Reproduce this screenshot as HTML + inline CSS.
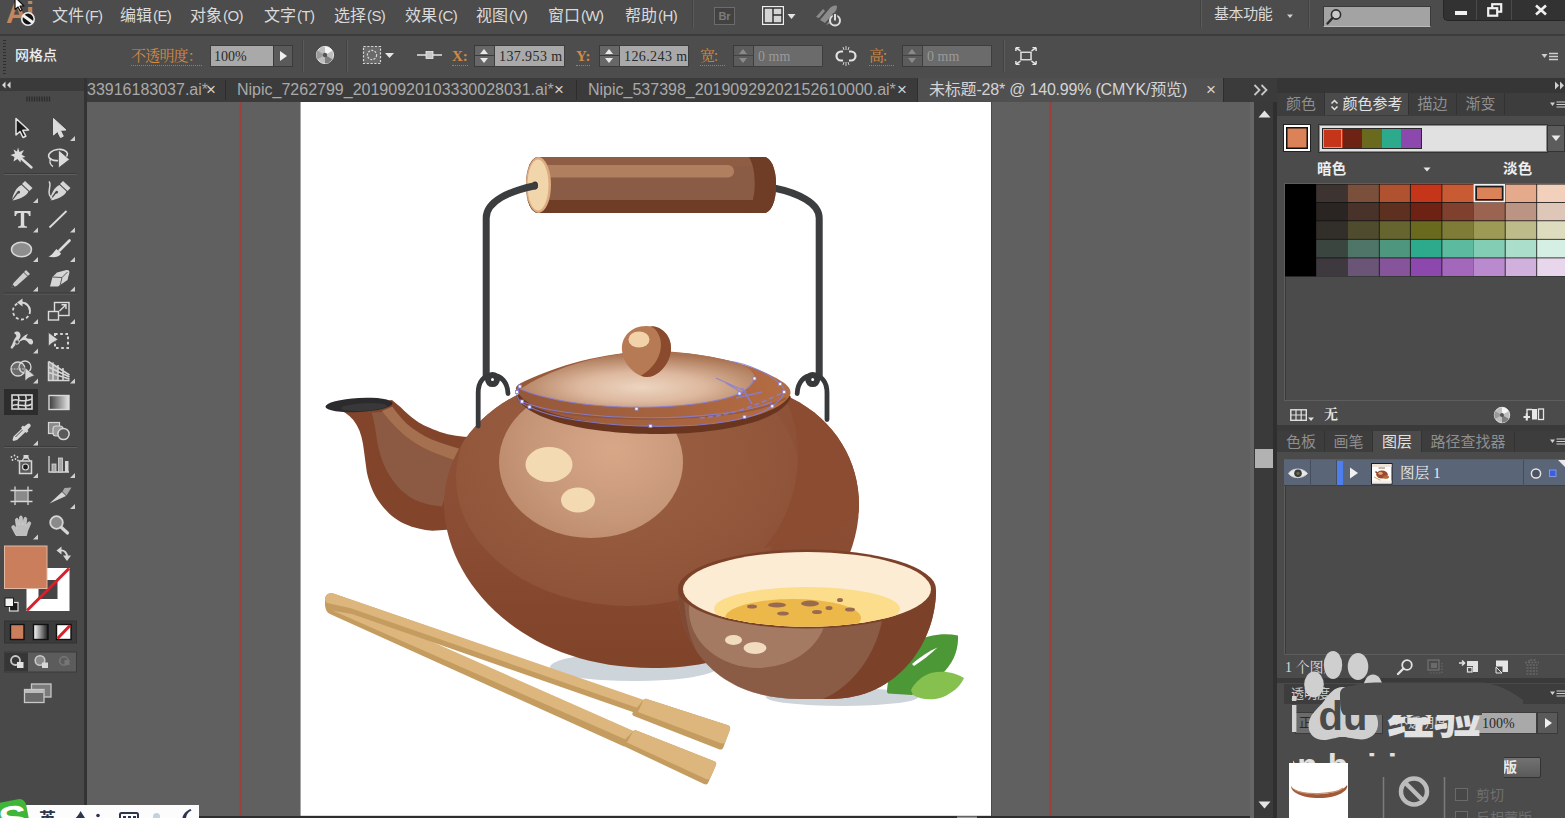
<!DOCTYPE html>
<html lang="zh-CN">
<head>
<meta charset="utf-8">
<title>未标题-28* @ 140.99% (CMYK/预览)</title>
<style>
*{box-sizing:border-box;margin:0;padding:0}
html,body{width:1565px;height:818px;overflow:hidden;background:#505050}
body{position:relative;font-family:"Liberation Sans","Noto Sans CJK SC",sans-serif;color:#d6d6d6;font-size:15px;line-height:1}
.abs,.abs-all *{position:absolute}
div,span,svg{position:absolute}
.serif{font-family:"Liberation Serif","Noto Serif CJK SC",serif}
/* ===== menu bar ===== */
#menubar{left:0;top:0;width:1565px;height:34px;background:#4c4c4c}
#menubar .mi{top:7px;height:18px;font-size:16px;line-height:18px;color:#dadada;white-space:nowrap}
#menuline{left:0;top:34px;width:1565px;height:2px;background:#3c3c3c}
/* ===== control bar ===== */
#ctrlbar{left:0;top:36px;width:1565px;height:42px;background:#4d4d4d}
.olabel{color:#d08a43;font-size:15px;line-height:18px;white-space:nowrap;border-bottom:1px dotted #b57a3c}
.field{background:#a9a9a9;color:#2a2a2a;font-size:14px;line-height:22px;height:22px;white-space:nowrap;overflow:hidden;border:1px solid #3e3e3e}
.field.dis{background:#6b6b6b;color:#9a9a9a}
.spin{width:21px;height:22px;background:linear-gradient(#676767 0 9.500px,#3a3a3a 9.500px 10.500px,#676767 10.500px);border:1px solid #3a3a3a}
.spin.dis{background:linear-gradient(#5c5c5c 0 9.500px,#444 9.500px 10.500px,#5c5c5c 10.500px)}
#menubar .mi i{font-style:normal;font-size:15px;letter-spacing:-0.6px;margin-left:1px}
.spin::before{content:"";position:absolute;left:5px;top:3px;border:4px solid transparent;border-top:0;border-bottom:5px solid #e8e8e8}
.spin::after{content:"";position:absolute;left:5px;top:12px;border:4px solid transparent;border-bottom:0;border-top:5px solid #e8e8e8}
.spin.dis::before{border-bottom-color:#8a8a8a}.spin.dis::after{border-top-color:#8a8a8a}
.vsep{width:1px;background:#434343;border-right:1px solid #5b5b5b;box-sizing:content-box}
/* ===== tabs ===== */
#tabstrip{left:87px;top:78px;width:1190px;height:24px;background:#3b3b3b}
.tab{top:0;height:24px;font-size:16px;line-height:24px;color:#a9a9a9;white-space:nowrap}
.tx{top:0;font-size:17px;line-height:23px;color:#d0d0d0}
.tsep{top:2px;width:1px;height:20px;background:#2c2c2c}
/* ===== tools ===== */
#tools{left:0;top:78px;width:84px;height:740px;background:#494949}
#toolsep{left:84px;top:78px;width:3px;height:740px;background:#333}
/* ===== canvas ===== */
#paste{left:87px;top:102px;width:1163px;height:716px;background:#606060;overflow:hidden}
#art{left:214px;top:0;width:690px;height:713px;background:#fff}
/* ===== right ===== */
#vscroll{left:1250px;top:102px;width:27px;height:716px;background:#3a3a3a}
#right{left:1277px;top:78px;width:288px;height:740px;background:#4b4b4b;overflow:hidden}
.ptabs{left:0;width:288px;height:22px;background:#3d3d3d}
.ptab{top:0;height:22px;font-size:15px;line-height:22px;color:#8f8f8f;white-space:nowrap;text-align:center;border-right:1px solid #333}
.ptab.on{background:#4b4b4b;color:#e2e2e2}
.blab{font-size:14.5px;line-height:17px;color:#efefef;font-weight:bold;white-space:nowrap;letter-spacing:0.3px}
</style>
</head>
<body>
<!-- MENU BAR -->
<div id="menubar">
  <span class="logo" style="left:6px;top:-2px;font-size:29px;line-height:30px;font-weight:bold;color:#c4875c;letter-spacing:-1px">Ai</span>
  <svg style="left:10px;top:0" width="30" height="30" viewBox="0 0 30 30">
    <circle cx="18" cy="19" r="6.2" fill="#111" stroke="#e8e8e8" stroke-width="1.6"/>
    <path d="M14.2 16.2 L21.8 21.8" stroke="#f2f2f2" stroke-width="3" stroke-linecap="round"/>
    <path d="M5 -3 L5 9.5 L8 7 L10.2 11 L12 10 L10 6.2 L14 6 Z" fill="#fff" stroke="#111" stroke-width="1.2" stroke-linejoin="round"/>
  </svg>
  <span class="mi" style="left:52px">文件<i>(F)</i></span>
  <span class="mi" style="left:120px">编辑<i>(E)</i></span>
  <span class="mi" style="left:190px">对象<i>(O)</i></span>
  <span class="mi" style="left:264px">文字<i>(T)</i></span>
  <span class="mi" style="left:334px">选择<i>(S)</i></span>
  <span class="mi" style="left:405px">效果<i>(C)</i></span>
  <span class="mi" style="left:476px">视图<i>(V)</i></span>
  <span class="mi" style="left:548px">窗口<i>(W)</i></span>
  <span class="mi" style="left:625px">帮助<i>(H)</i></span>
  <div class="vsep" style="left:692px;top:0;height:28px"></div>
  <div style="left:714px;top:7px;width:21px;height:18px;background:#424242;border:1px solid #6b6b6b;color:#7c7c7c;font-size:11px;line-height:16px;text-align:center;font-weight:bold">Br</div>
  <svg style="left:762px;top:6px" width="36" height="20" viewBox="0 0 36 20">
    <rect x="0.5" y="0.5" width="21" height="18" fill="#d4d4d4" stroke="#eee"/>
    <rect x="2" y="2" width="18" height="15" fill="none" stroke="#2b2b2b" stroke-width="1.4"/>
    <path d="M11 2 V17 M11 9 H20" stroke="#2b2b2b" stroke-width="1.4"/>
    <path d="M25.5 8 L33.5 8 L29.5 13 Z" fill="#e4e4e4"/>
  </svg>
  <svg style="left:812px;top:3px" width="32" height="26" viewBox="0 0 32 26">
    <path d="M4 14 L11 6 L13 8 L7 15 Z M8 17 L18 5 C20 3 23 2 25 3 C25 6 24 8 22 10 L13 20 Z M14 22 L18 17 L19 20 Z" fill="#8c8c8c"/>
    <circle cx="23" cy="17.5" r="5" fill="#4f4f4f" stroke="#dcdcdc" stroke-width="2"/>
    <path d="M23 10 V17" stroke="#4f4f4f" stroke-width="4.5"/>
    <path d="M23 11 V17.5" stroke="#dcdcdc" stroke-width="2"/>
  </svg>
  <div class="vsep" style="left:1200px;top:0;height:28px"></div>
  <span class="mi" style="left:1214px;top:5px;font-size:15px;letter-spacing:-0.4px">基本功能</span>
  <svg style="left:1286px;top:14px" width="8" height="5" viewBox="0 0 8 5"><path d="M1 0.5 L7 0.5 L4 4 Z" fill="#d0d0d0"/></svg>
  <div class="vsep" style="left:1308px;top:0;height:28px"></div>
  <div style="left:1323px;top:6px;width:108px;height:21px;background:#a3a3a3;border:1px solid #3a3a3a;border-bottom-color:#bbb"></div>
  <svg style="left:1325px;top:8px" width="20" height="18" viewBox="0 0 20 18">
    <circle cx="11" cy="6.5" r="4.6" fill="#c9c9c9" stroke="#2e2e2e" stroke-width="1.6"/>
    <path d="M7.5 10 L2.5 15.5" stroke="#2e2e2e" stroke-width="2.4" stroke-linecap="round"/>
  </svg>
  <div style="left:1443px;top:0;width:122px;height:21px;background:#323232;border-radius:0 0 0 5px;border:1px solid #262626;border-top:0;border-right:0"></div>
  <div style="left:1476px;top:0;width:1px;height:20px;background:#4a4a4a"></div>
  <div style="left:1511px;top:0;width:1px;height:20px;background:#4a4a4a"></div>
  <div style="left:1455px;top:11px;width:12px;height:4px;background:#f0f0f0"></div>
  <svg style="left:1487px;top:3px" width="16" height="14" viewBox="0 0 16 14">
    <rect x="5.2" y="1.2" width="9" height="7.5" fill="none" stroke="#f0f0f0" stroke-width="2.2"/>
    <rect x="1.2" y="5.2" width="9" height="7.5" fill="#323232" stroke="#f0f0f0" stroke-width="2.2"/>
  </svg>
  <svg style="left:1534px;top:4px" width="14" height="12" viewBox="0 0 14 12"><path d="M2 1.5 L12 10.5 M12 1.5 L2 10.5" stroke="#f0f0f0" stroke-width="2.6"/></svg>
</div>
<div id="menuline"></div>
<!-- CONTROL BAR -->
<div id="ctrlbar">
  <div style="left:3px;top:4px;width:3px;height:34px;background:repeating-linear-gradient(to bottom,#2e2e2e 0 1px,transparent 1px 3px)"></div>
  <span style="left:15px;top:10px;font-size:14px;line-height:18px;color:#ececec;white-space:nowrap;font-weight:500">网格点</span>
  <span class="olabel serif" style="left:131px;top:11px;letter-spacing:-0.8px">不透明度：</span>
  <div class="field serif" style="left:210px;top:9px;width:64px;padding-left:3px">100%</div>
  <div style="left:273px;top:9px;width:20px;height:22px;background:#5a5a5a;border:1px solid #3a3a3a"></div>
  <svg style="left:279px;top:14px" width="9" height="12" viewBox="0 0 9 12"><path d="M1 1 L8 6 L1 11 Z" fill="#f0f0f0"/></svg>
  <div class="vsep" style="left:302px;top:4px;height:32px"></div>
  <svg style="left:315px;top:9px" width="20" height="20" viewBox="0 0 20 20">
    <circle cx="10" cy="10" r="8.6" fill="#bdbdbd" stroke="#e2e2e2" stroke-width="1"/>
    <path d="M10 10 L10 1.4 A8.6 8.6 0 0 1 17.4 5.7 Z" fill="#f4f4f4"/>
    <path d="M10 10 L17.4 14.3 A8.6 8.6 0 0 1 10 18.6 Z" fill="#7d7d7d"/>
    <path d="M10 10 L2.6 14.3 A8.6 8.6 0 0 1 2.6 5.7 Z" fill="#9a9a9a"/>
    <circle cx="10" cy="10" r="2.2" fill="#555"/>
  </svg>
  <div class="vsep" style="left:346px;top:4px;height:32px"></div>
  <svg style="left:362px;top:9px" width="34" height="20" viewBox="0 0 34 20">
    <rect x="1.5" y="1.5" width="17" height="17" fill="#6a6a6a" stroke="#d8d8d8" stroke-width="1.2" stroke-dasharray="2.2 1.6"/>
    <circle cx="10" cy="10" r="4.6" fill="none" stroke="#d8d8d8" stroke-width="1.2" stroke-dasharray="2 1.4"/>
    <path d="M23 8 L32 8 L27.5 13 Z" fill="#e6e6e6"/>
  </svg>
  <svg style="left:416px;top:12px" width="28" height="14" viewBox="0 0 28 14">
    <path d="M1 7 H26" stroke="#dcdcdc" stroke-width="1.6"/>
    <rect x="10" y="3.5" width="7" height="7" fill="#c8c8c8" stroke="#eee" stroke-width="0.8"/>
  </svg>
  <span class="olabel serif" style="left:452px;top:11px;font-weight:bold">X:</span>
  <div class="spin" style="left:474px;top:9px"></div>
  <div class="field serif" style="left:494px;top:9px;width:71px;padding-left:4px;letter-spacing:0.4px">137.953 m</div>
  <span class="olabel serif" style="left:576px;top:11px;font-weight:bold">Y:</span>
  <div class="spin" style="left:599px;top:9px"></div>
  <div class="field serif" style="left:619px;top:9px;width:70px;padding-left:4px;letter-spacing:0.4px">126.243 m</div>
  <span class="olabel serif" style="left:700px;top:11px;letter-spacing:-2.500px">宽：</span>
  <div class="spin dis" style="left:733px;top:9px"></div>
  <div class="field dis serif" style="left:753px;top:9px;width:70px;padding-left:4px">0 mm</div>
  <svg style="left:834px;top:9px" width="24" height="22" viewBox="0 0 24 22">
    <path d="M9 6.5 H7 A4.5 4.5 0 0 0 7 15.5 H9 M15 6.5 H17 A4.5 4.5 0 0 1 17 15.5 H15" fill="none" stroke="#e2e2e2" stroke-width="2.2"/>
    <path d="M12 1 V5 M12 17 V21 M9 2 L10 5 M15 2 L14 5 M9 20 L10 17 M15 20 L14 17" stroke="#d0d0d0" stroke-width="1"/>
  </svg>
  <span class="olabel serif" style="left:869px;top:11px;letter-spacing:-2.500px">高：</span>
  <div class="spin dis" style="left:902px;top:9px"></div>
  <div class="field dis serif" style="left:922px;top:9px;width:70px;padding-left:4px">0 mm</div>
  <div class="vsep" style="left:1003px;top:4px;height:32px"></div>
  <svg style="left:1015px;top:10px" width="22" height="20" viewBox="0 0 24 24" preserveAspectRatio="none">
    <rect x="6.5" y="7.5" width="11" height="9" fill="none" stroke="#e6e6e6" stroke-width="1.6"/>
    <path d="M1 2 L6 6 M23 2 L18 6 M1 22 L6 18 M23 22 L18 18" stroke="#e6e6e6" stroke-width="1.8"/>
    <path d="M1 2 H5 M1 2 V6 M23 2 H19 M23 2 V6 M1 22 H5 M1 22 V18 M23 22 H19 M23 22 V18" stroke="#e6e6e6" stroke-width="1.6"/>
  </svg>
  <svg style="left:1541px;top:16px" width="18" height="10" viewBox="0 0 18 10">
    <path d="M0.5 2 L6.5 2 L3.5 6 Z" fill="#cfcfcf"/>
    <path d="M8 1.5 H17 M8 4.5 H17 M8 7.5 H17" stroke="#cfcfcf" stroke-width="1.3"/>
  </svg>
</div>
<!-- TOOLS -->
<div id="tools">
  <div style="left:0;top:0;width:84px;height:13px;background:#3a3a3a"></div>
  <svg style="left:0;top:0" width="84" height="740" viewBox="0 78 84 740">
    <defs>
      <linearGradient id="tgGrad" x1="0" y1="0" x2="1" y2="0"><stop offset="0" stop-color="#3c3c3c"/><stop offset="1" stop-color="#e4e4e4"/></linearGradient>
      <linearGradient id="tgGrad2" x1="0" y1="0" x2="1" y2="0"><stop offset="0" stop-color="#ffffff"/><stop offset="1" stop-color="#1a1a1a"/></linearGradient>
      <path id="corner" d="M0 5 L5 5 L5 0 Z" fill="#d0d0d0"/>
    </defs>
    <!-- header -->
    <path d="M5.5 81.5 L2 85 L5.5 88.5 Z M10.5 81.5 L7 85 L10.5 88.5 Z" fill="#d8d8d8"/>
    <path d="M27 96.5 V101.5 M29.5 96.5 V101.5 M32 96.5 V101.5 M34.5 96.5 V101.5 M37 96.5 V101.5 M39.5 96.5 V101.5 M42 96.5 V101.5 M44.5 96.5 V101.5 M47 96.5 V101.5 M49.5 96.5 V101.5" stroke="#2c2c2c" stroke-width="1.3"/>
    <!-- separators -->
    <g stroke="#5e5e5e" stroke-width="1"><path d="M4 174.5 H77 M4 294 H77 M4 447.5 H77"/></g>
    <g stroke="#3b3b3b" stroke-width="1"><path d="M4 173.5 H77 M4 293 H77 M4 446.5 H77"/></g>
    <!-- row1: selection / direct selection -->
    <path d="M16 118.5 L16 135 L20 131.5 L23 137.5 L25.8 136.2 L22.8 130.3 L28.5 130 Z" fill="#1c1c1c" stroke="#e4e4e4" stroke-width="1.5" stroke-linejoin="round"/>
    <path d="M53.5 118.5 L53.5 135 L57.5 131.5 L60.5 137.5 L63.3 136.2 L60.3 130.3 L66 130 Z" fill="#dcdcdc" stroke="#dcdcdc" stroke-width="1" stroke-linejoin="round"/>
    <use href="#corner" x="70" y="136"/>
    <!-- row2: wand / lasso -->
    <path d="M18.5 156 L31.5 167.5" stroke="#dcdcdc" stroke-width="2.4" stroke-linecap="round"/>
    <path d="M18 147.5 L19.5 152 L24 150 L21.5 154.5 L25.5 157 L21 158 L20.5 162.5 L17.5 159 L13.5 161.5 L14.5 157 L10.5 155 L15 153.5 L13.5 149.5 L17 151.5 Z" fill="#dcdcdc"/>
    <ellipse cx="58" cy="155" rx="9.5" ry="5.5" fill="none" stroke="#dcdcdc" stroke-width="1.6" transform="rotate(-8 58 155)"/>
    <path d="M51 158 C49 161 50 165 53 166.5" fill="none" stroke="#dcdcdc" stroke-width="1.4"/>
    <path d="M58.5 150 L58.5 168 L69.5 159.5 Z" fill="#dcdcdc" stroke="#4c4c4c" stroke-width="0.8"/>
    <!-- row3: pen / curvature pen -->
    <g id="pen" fill="#d6d6d6">
      <path d="M25 181 L32.5 188 L29.5 191 L22 184 Z"/>
      <path d="M21.5 185 L28.5 191.5 C26 197 19 199 12.5 200.5 L18 193.5 C19 194 20.5 193 20 191.5 C19.5 190.3 18 190.5 17.5 191.5 L12 199.5 C13.5 193.5 16 187.5 21.5 185 Z"/>
    </g>
    <use href="#corner" x="33" y="198"/>
    <use href="#pen" x="38" y="0"/>
    <path d="M49 181.5 C52 185 47.5 190 49.5 195 C50.5 197.5 53 199 54 199.5" fill="none" stroke="#d6d6d6" stroke-width="1.5"/>
    <!-- row4: type / line -->
    <path d="M14.5 211 H30.5 V216 H29 C28.6 214 28 213 26 213 H24.2 V224.5 C24.2 226 25 226.3 27 226.5 V227.8 H18 V226.5 C20 226.3 20.8 226 20.8 224.5 V213 H19 C17 213 16.4 214 16 216 H14.5 Z" fill="#dcdcdc"/>
    <use href="#corner" x="33" y="227.500"/>
    <path d="M49.5 227.5 L66.5 211" stroke="#dcdcdc" stroke-width="1.8"/>
    <use href="#corner" x="70" y="227.500"/>
    <!-- row5: ellipse / brush -->
    <ellipse cx="21.5" cy="249.5" rx="10" ry="7.2" fill="#8e8e8e" stroke="#d8d8d8" stroke-width="1.5"/>
    <use href="#corner" x="33" y="257"/>
    <path d="M69.5 240.5 L59.5 250.5" stroke="#dcdcdc" stroke-width="2.6" stroke-linecap="round"/>
    <path d="M56.5 249 L61 253.5 C59 257.5 53 258 48.5 256.5 C52 255.5 53.5 252 56.5 249 Z" fill="#dcdcdc"/>
    <use href="#corner" x="70" y="257"/>
    <!-- row6: pencil / eraser -->
    <path d="M26 270 L30 274 L16.5 286 L11.5 288 L13.5 283 Z" fill="#cfcfcf"/>
    <path d="M23.5 272 L28 276.5" stroke="#4c4c4c" stroke-width="1"/>
    <path d="M11.5 288 L12.8 284.8 L14.8 286.8 Z" fill="#3a3a3a"/>
    <use href="#corner" x="33" y="286.500"/>
    <path d="M57 272.5 L66.5 270 C68.5 269.6 69.8 271 69.3 273 L67.5 280 L58 286.5 L50 286.5 L52.5 277 Z" fill="#d6d6d6"/>
    <path d="M52.5 277 L62 277.5 L67.5 272 M62 277.5 L60 286" fill="none" stroke="#5a5a5a" stroke-width="1"/>
    <use href="#corner" x="70" y="286.500"/>
    <!-- row7: rotate / scale -->
    <circle cx="21.5" cy="311" r="8.5" fill="none" stroke="#d6d6d6" stroke-width="1.8" stroke-dasharray="3 2.4"/>
    <path d="M21.5 302.5 A8.5 8.5 0 0 1 30 311" fill="none" stroke="#d6d6d6" stroke-width="2"/>
    <path d="M22.5 298.5 L22.5 306.5 L17 302.5 Z" fill="#d6d6d6"/>
    <use href="#corner" x="33" y="319"/>
    <rect x="54.5" y="302.5" width="14.5" height="13" fill="none" stroke="#dcdcdc" stroke-width="1.4"/>
    <rect x="48.5" y="311.5" width="10" height="8.5" fill="#4c4c4c" stroke="#dcdcdc" stroke-width="1.4"/>
    <path d="M59.5 311 L66 304.8 M61.5 304.8 H66 V309" fill="none" stroke="#dcdcdc" stroke-width="1.4"/>
    <use href="#corner" x="70" y="319"/>
    <!-- row8: warp / free transform -->
    <path d="M14 333 C17 330 21 332 20.5 336 C20 340 16 341 15 345 C18 344 20 340 24 340 C28 340 28 345 31.5 344.5 C33.5 344 33.5 341 32 339.5 C30 338 27.5 339.5 26 337.5 L28 334 C24 335 22 338 19 341 C17 343 14.5 346 12 349 L10.5 347.5 C13 344 13 340 15.5 337.5 C17 336 16.5 334.5 14 333 Z" fill="#d6d6d6"/>
    <circle cx="17" cy="342" r="2.2" fill="#4c4c4c" stroke="#d6d6d6" stroke-width="1"/>
    <use href="#corner" x="33" y="348.500"/>
    <rect x="55" y="334" width="13" height="14" fill="none" stroke="#d6d6d6" stroke-width="2" stroke-dasharray="2.6 2.6"/>
    <path d="M48.5 332.5 L48.5 346 L52 343 L58 339.5 Z" fill="#d6d6d6" stroke="#4c4c4c" stroke-width="0.6"/>
    <!-- row9: shape builder / perspective -->
    <circle cx="18" cy="369" r="7" fill="#6a6a6a" stroke="#d6d6d6" stroke-width="1.3"/>
    <circle cx="25" cy="367" r="6" fill="none" stroke="#d6d6d6" stroke-width="1.3"/>
    <path d="M11 369 H24" stroke="#d6d6d6" stroke-width="1" stroke-dasharray="1.6 1.2"/>
    <path d="M25 367.5 L25 381 L28.5 378 L34.5 375.5 Z" fill="#d6d6d6" stroke="#4c4c4c" stroke-width="0.7"/>
    <use href="#corner" x="33" y="378.500"/>
    <path d="M48.5 361.5 V380.5 H69.5 M53 362.5 V380.5 M58 365 V380.5 M63 368 V380.5 M48.5 367 L69.5 377 M48.5 372.5 L69.5 379 M48.5 361.5 L69.5 375" fill="none" stroke="#d6d6d6" stroke-width="1.5"/>
    <path d="M49 363 L58 367 V380 H49 Z" fill="#d6d6d6" opacity="0.55"/>
    <use href="#corner" x="70" y="378.500"/>
    <!-- row10: mesh (active) / gradient -->
    <rect x="4" y="389" width="34" height="26" fill="#2d2d2d"/>
    <rect x="12" y="395" width="20" height="14" fill="none" stroke="#d8d8d8" stroke-width="1.6"/>
    <path d="M12 401 C17 397 21 404 32 399 M12 406 C18 402 24 409 32 404 M18 395 C21 400 16 404 19 409 M25.5 395 C28 400 23 404 26.5 409" fill="none" stroke="#d8d8d8" stroke-width="1.5"/>
    <rect x="49" y="395.5" width="20" height="14" fill="url(#tgGrad)" stroke="#d8d8d8" stroke-width="1.4"/>
    <!-- row11: eyedropper / blend -->
    <path d="M27.5 424 C29 422.5 31.5 424.5 30.5 426.5 L27.5 430 L28.5 431 L26.5 433 L25.5 432 L17 440 L13.5 441 L12.5 440 L13.5 436.5 L22 428.5 L21 427.5 L23 425.5 L24 426.5 Z" fill="#d6d6d6"/>
    <path d="M22.5 430 L15.5 437" stroke="#4c4c4c" stroke-width="1"/>
    <use href="#corner" x="33" y="440.500"/>
    <rect x="48.5" y="422.5" width="11" height="11" fill="#8a8a8a" stroke="#d6d6d6" stroke-width="1.2"/>
    <rect x="53" y="426" width="10" height="10" rx="3" fill="#9a9a9a" stroke="#d6d6d6" stroke-width="1.2"/>
    <circle cx="63.5" cy="434" r="5.6" fill="#5a5a5a" stroke="#d6d6d6" stroke-width="1.5"/>
    <!-- row12: symbol sprayer / graph -->
    <rect x="19.5" y="461" width="12" height="12.5" fill="#5a5a5a" stroke="#d6d6d6" stroke-width="1.5"/>
    <rect x="23.5" y="455" width="5" height="3.5" fill="#d6d6d6"/>
    <path d="M22 461 L24 458 H28 L30 461" fill="none" stroke="#d6d6d6" stroke-width="1.2"/>
    <circle cx="25.5" cy="467" r="3" fill="#1e1e1e" stroke="#d6d6d6" stroke-width="1.2"/>
    <g fill="#d6d6d6"><circle cx="11.5" cy="457" r="0.9"/><circle cx="14.5" cy="455.5" r="0.9"/><circle cx="17.5" cy="457" r="0.9"/><circle cx="12.5" cy="460" r="0.9"/><circle cx="15.5" cy="459" r="0.9"/><circle cx="18" cy="460.5" r="0.9"/></g>
    <use href="#corner" x="33" y="473"/>
    <path d="M49 456 V472 H69" fill="none" stroke="#d6d6d6" stroke-width="1.3"/>
    <rect x="52" y="464" width="4" height="8" fill="#a8a8a8" stroke="#d6d6d6" stroke-width="0.8"/>
    <rect x="58.5" y="458" width="4" height="14" fill="#a8a8a8" stroke="#d6d6d6" stroke-width="0.8"/>
    <rect x="65" y="461" width="3.5" height="11" fill="#d6d6d6"/>
    <use href="#corner" x="70" y="473"/>
    <!-- row13: artboard / slice -->
    <rect x="15.5" y="490.5" width="12" height="11" fill="#8a8a8a"/>
    <path d="M15 486.5 V505 M28 486.5 V505 M10.5 490.5 H32.5 M10.5 501.5 H32.5" stroke="#d6d6d6" stroke-width="1.3"/>
    <path d="M49.5 503.5 L62 492 L66 496 Z" fill="#d6d6d6"/>
    <path d="M62.5 491.5 L64.5 488 L71.5 487.5 L66.5 495.5 Z" fill="#a8a8a8"/>
    <use href="#corner" x="70" y="504"/>
    <!-- row14: hand / zoom -->
    <path d="M16 535.5 L12 528 C11 526 13.5 524.5 15 526.5 L16.5 528.5 L15.5 520 C15.3 518 18 517.7 18.3 519.7 L19.2 525 L19.5 517.5 C19.5 515.5 22.3 515.5 22.3 517.5 L22.5 525 L24 518.5 C24.4 516.6 27 517.2 26.7 519.2 L25.8 526 L28 522.5 C29 521 31.3 522 30.5 524 L27.5 531 L26.5 535.5 Z" fill="#bdbdbd" stroke="#d8d8d8" stroke-width="0.7"/>
    <use href="#corner" x="33" y="534.500"/>
    <circle cx="56.5" cy="522.5" r="6.3" fill="#8a8a8a" stroke="#d6d6d6" stroke-width="1.8"/>
    <path d="M61.5 527.5 L67.5 533" stroke="#d6d6d6" stroke-width="3.2" stroke-linecap="round"/>
    <!-- fill / stroke -->
    <rect x="26.5" y="568" width="43" height="43" fill="#ffffff"/>
    <rect x="38.5" y="580" width="19" height="19" fill="#454545"/>
    <path d="M27 610.5 L69 568.5" stroke="#d6202a" stroke-width="3"/>
    <rect x="4.5" y="546" width="42.5" height="42.5" fill="#cb7e5b" stroke="#dfb9a6" stroke-width="1"/>
    <path d="M60.500 550.500 C64.500 550 67 553 67 556.500" fill="none" stroke="#d6d6d6" stroke-width="1.800"/>
    <path d="M56.500 550.500 L61.500 546.500 L61.500 554.500 Z M67 561 L63 555.500 L71 555.500 Z" fill="#d6d6d6"/>
    <rect x="9.5" y="602.5" width="8.5" height="8.5" fill="#1a1a1a" stroke="#e0e0e0" stroke-width="1.2"/>
    <rect x="5" y="598" width="8.5" height="8.5" fill="#f2f2f2" stroke="#1a1a1a" stroke-width="1"/>
    <!-- color mode row -->
    <rect x="4.5" y="621" width="72" height="22" fill="#3b3b3b" stroke="#333" stroke-width="1"/>
    <rect x="10.5" y="624.5" width="13.5" height="15" fill="#cb7e5b" stroke="#111" stroke-width="1.4"/>
    <rect x="33.5" y="624.5" width="14.5" height="15" fill="url(#tgGrad2)" stroke="#111" stroke-width="1.4"/>
    <rect x="56.5" y="624.5" width="14.5" height="15" fill="#fff" stroke="#111" stroke-width="1.4"/>
    <path d="M57.5 638.5 L70 625.5" stroke="#d6202a" stroke-width="3"/>
    <!-- draw mode row -->
    <rect x="4.5" y="652" width="72" height="20" fill="#5c5c5c" stroke="#3a3a3a" stroke-width="1"/>
    <rect x="5" y="652.5" width="23" height="19" fill="#363636"/>
    <circle cx="15.5" cy="660.5" r="4.5" fill="none" stroke="#c8c8c8" stroke-width="1.8"/>
    <rect x="17" y="662" width="6.5" height="6" fill="#e2e2e2"/>
    <circle cx="40" cy="660.5" r="4.8" fill="#8a8a8a" stroke="#c8c8c8" stroke-width="1.6"/>
    <rect x="42" y="662.5" width="6" height="5.5" fill="#d8d8d8"/>
    <circle cx="64" cy="661" r="4.2" fill="none" stroke="#767676" stroke-width="1.6"/>
    <rect x="64.5" y="660" width="5" height="5" fill="#767676"/>
    <!-- screen mode -->
    <rect x="31.500" y="684" width="19.500" height="13" fill="#7b7b7b" stroke="#c8c8c8" stroke-width="1.3"/>
    <rect x="24.500" y="689.500" width="19.500" height="13" fill="#6a6a6a" stroke="#c8c8c8" stroke-width="1.3"/>
    <rect x="25" y="690" width="18.500" height="3" fill="#bdbdbd"/>
  </svg>
</div>
<div id="toolsep"></div>
<!-- TABS -->
<div id="tabstrip">
  <span class="tab" id="t1" style="left:0">33916183037.ai*</span><span class="tx" style="left:119px">×</span>
  <div class="tsep" style="left:138px"></div>
  <span class="tab" id="t2" style="left:150px">Nipic_7262799_20190920103330028031.ai*</span><span class="tx" style="left:467px">×</span>
  <div class="tsep" style="left:489px"></div>
  <span class="tab" id="t3" style="left:501px">Nipic_537398_20190929202152610000.ai*</span><span class="tx" style="left:810px">×</span>
  <div style="left:830px;top:0;width:307px;height:24px;background:#505050;border-left:1px solid #2e2e2e;border-right:1px solid #2e2e2e"></div>
  <span class="tab" id="t4" style="left:842px;color:#d4d4d4;letter-spacing:-0.2px">未标题-28* @ 140.99% (CMYK/预览)</span><span class="tx" style="left:1119px;color:#d4d4d4">×</span>
  <svg style="left:1166px;top:6px" width="16" height="12" viewBox="0 0 16 12"><path d="M1.5 1 L6.5 6 L1.5 11 M8.5 1 L13.5 6 L8.5 11" fill="none" stroke="#c8c8c8" stroke-width="1.8"/></svg>
</div>
<!-- CANVAS -->
<div id="paste">
<svg id="artsvg" style="left:0;top:0" width="1163" height="716" viewBox="87 102 1163 716">
  <defs>
    <radialGradient id="gLid" cx="0.52" cy="0.640" r="0.600">
      <stop offset="0" stop-color="#edd5c1"/>
      <stop offset="0.450" stop-color="#ddb89e"/>
      <stop offset="1" stop-color="#a97453"/>
    </radialGradient>
    <radialGradient id="gMid" cx="0.450" cy="0.400" r="0.650"><stop offset="0" stop-color="#9c6145"/><stop offset="0.600" stop-color="#94593d"/><stop offset="1" stop-color="#8c5036"/></radialGradient>
    <linearGradient id="gRim" x1="0" y1="0" x2="1" y2="0"><stop offset="0" stop-color="#95583a"/><stop offset="0.600" stop-color="#a8643f"/><stop offset="1" stop-color="#b56c42"/></linearGradient>
    <radialGradient id="gHi" cx="0.62" cy="0.42" r="0.75">
      <stop offset="0" stop-color="#d8a788"/>
      <stop offset="0.6" stop-color="#c7977a"/>
      <stop offset="1" stop-color="#b98667"/>
    </radialGradient>
    <linearGradient id="gBody" x1="0" y1="0" x2="0" y2="1">
      <stop offset="0" stop-color="#8f5339"/>
      <stop offset="0.55" stop-color="#8a4c32"/>
      <stop offset="1" stop-color="#7f432a"/>
    </linearGradient>
    <clipPath id="cBody"><path id="bodyShape" d="M519 394 C470 418 444 462 444 503 C444 580 520 668 652 668 C790 668 859 580 859 505 C859 462 836 420 791 398 Z"/></clipPath>
    <clipPath id="cCup"><path d="M678 590 C678 640 712 699 800 699 L830 699 C900 699 936 640 936 590 Z"/></clipPath>
    <clipPath id="cCupIn"><ellipse cx="807" cy="589.300" rx="124" ry="37.300"/></clipPath>
    <clipPath id="cHandle"><rect x="526" y="157" width="250" height="56" rx="12" ry="26"/></clipPath>
  </defs>
  <!-- guides -->
  <rect x="239.500" y="102" width="2.200" height="716" fill="#9c403c"/>
  <rect x="1049.200" y="102" width="2.200" height="716" fill="#9c403c"/>
  <!-- artboard -->
  <rect x="300" y="102" width="692" height="714" fill="#4a4a4a"/>
  <rect x="300.500" y="102" width="690.500" height="713.800" fill="#ffffff"/>
  <rect x="87" y="816" width="1163" height="2" fill="#2e2e2e"/><rect x="957" y="816.500" width="20" height="1.500" fill="#9a9a9a"/>
  <!-- shadows -->
  <ellipse cx="634" cy="667" rx="84" ry="14" fill="#cdd4da"/>
  <ellipse cx="842" cy="697" rx="76" ry="9" fill="#cdd4da"/>
  <!-- wire handle -->
  <!-- wooden handle -->
  <path d="M774 188 C798 193 819.200 203 819.200 218 L819.200 376" fill="none" stroke="#3b3d3f" stroke-width="7" stroke-linecap="round"/>
  <g clip-path="url(#cHandle)">
    <rect x="526" y="157" width="250" height="56" fill="#8a5c46"/>
    <rect x="526" y="157" width="250" height="9" fill="#8f5d43"/>
    <rect x="540" y="165" width="194" height="12.5" rx="6" fill="#b07f5f"/>
    <rect x="526" y="200" width="250" height="13" fill="#6f3c25"/>
    <path d="M749 157 C757 170 757 200 747 213 L776 213 L776 157 Z" fill="#6f3c25"/>
  </g>
  <ellipse cx="538.5" cy="185" rx="12.5" ry="28" fill="#dcab80"/>
  <ellipse cx="538" cy="185" rx="10.5" ry="25.5" fill="#f2d6ab"/>
  <ellipse cx="535" cy="185.5" rx="3" ry="4" fill="#33302e"/>
  <path d="M534 186 C510 191 486.200 201 486.200 218 L486.200 376" fill="none" stroke="#3b3d3f" stroke-width="7" stroke-linecap="round"/>
  <!-- spout -->
  <path d="M334 408 C350 412 360 424 363 444 C365 458 366 466 367 473 C370 486 374 495 379.600 502.400 C388 514 396 520 405 524 C414 528 423 530 432.400 530.700 L458 529 L472 437 C462 437 450 435.500 440 432 C430 428 422 425 416.700 421 C410 416 405 412 401 407.500 L392 400 Z" fill="#82452b"/>
  <path d="M371.700 412.400 C375 424 376 434 377.600 443.700 C380 456 384 466 389.300 475 C395 484 401 491 409 496.500 C418 502 428 505 442 506.500 L455.500 460.500 C446 457.500 438 454.500 431.500 451.800 C421 447.300 413 442.300 405.500 436.300 C398.500 430.300 392.500 424.300 387.800 418.600 L383 412 Z" fill="#8c5a43"/>
  <path d="M382 411 C385 415 386.500 417 387.800 418.600 C392.500 424.300 398.500 430.300 405.500 436.300 C413 442.300 421 447.300 431.500 451.800 C439 455 447 458 455.500 460.500 L459 448.500 C450 446 440 443 432.400 439.800 C422 435 414 430 407 424 C401 418 396 412 392.300 406.500 Z" fill="#a4704f"/>
  <ellipse cx="359" cy="405" rx="33.600" ry="7" fill="#2b2b2d" transform="rotate(-3 359 405)"/>
  <ellipse cx="364" cy="407" rx="23" ry="3.800" fill="#38383a" transform="rotate(-3 364 407)"/>
  <!-- body -->
  <use href="#bodyShape" fill="url(#gBody)"/>
  <g clip-path="url(#cBody)">
    <ellipse cx="628" cy="478" rx="172" ry="128" fill="url(#gMid)"/>
    <path d="M781 392 C806 430 806 500 764 548 C800 540 840 540 870 500 L870 392 Z" fill="#8b4c32"/>
    <ellipse cx="591" cy="462" rx="92" ry="76" fill="url(#gHi)"/>
  </g>
  <ellipse cx="549" cy="464.5" rx="23.5" ry="17.5" fill="#f3dab2"/>
  <ellipse cx="578" cy="500" rx="17" ry="12.5" fill="#f3dab2"/>
  <!-- lid -->
  <path d="M516 396 C538 446 772 447 791 397 C780 380 540 380 516 396 Z" fill="#6a351f"/>
  <path d="M517 391 C514 388 517 385 521 383 C548 370 590 354 648 351 C700 351 752 363 781 381 C788 385 792 390 790 395 C768 438 540 437 517 391 Z" fill="url(#gRim)"/>
  <path d="M520 401 C560 424 740 426 786 398" fill="none" stroke="#8c4e30" stroke-width="2" opacity="0.600"/>
  <path d="M520 389 C548 371 592 354 648 351.500 C690 351.500 728 358 746 367 C752 371 755 374 754.500 378.600 C752 385 746 390 739.600 393.500 C700 411 580 414 520 389 Z" fill="url(#gLid)"/>
  <!-- selection paths -->
  <g fill="none" stroke="#8680d8" stroke-width="1.100" opacity="0.850">
    <path d="M519.800 386.500 C512 394 520 404 529.500 407 C580 432 740 434 772 406 C784 398 788 390 780 384 C770 374 750 364 728 361"/>
    <path d="M520 389 C580 414 700 411 739.600 393.500 C748 389 753 384 754.500 378.600"/>
    <path d="M522 401.400 C570 422 720 424 772 402"/>
    <path d="M716 378 L747 392 M726 383 L744 394" stroke-width="1.300"/>
    <path d="M700 418 C730 416 760 404 784 392" stroke-dasharray="5 3" stroke-width="1.600"/>
    <path d="M742 388 L752 404 M736 398 L762 392" stroke-width="1.600"/>
  </g>
  <g fill="#fff" stroke="#8680d8" stroke-width="0.800">
    <rect x="518.300" y="385" width="3" height="3"/><rect x="515.500" y="390.500" width="3" height="3"/>
    <rect x="520.500" y="400" width="3" height="3"/><rect x="528" y="405.500" width="3" height="3"/>
    <rect x="635" y="407.200" width="3" height="3"/><rect x="649" y="424.500" width="3" height="3"/>
    <rect x="743" y="415.300" width="3" height="3"/><rect x="770.800" y="404.800" width="3" height="3"/>
    <rect x="782.700" y="390.400" width="3" height="3"/><rect x="778.700" y="382.500" width="3" height="3"/>
    <rect x="753" y="377" width="3" height="3"/><rect x="738" y="392" width="3" height="3"/>
  </g>
  <!-- knob -->
  <path d="M646 326 C664 326 672 338 671 350 C670 364 658 377 647 377 C636 377 623 364 622 350 C621 338 630 326 646 326 Z" fill="#b67a55"/>
  <path d="M650 326 C664 326 672 338 671 350 C670 364 658 377 647 377 C645 377 643 376.5 641 375.5 C655 368 664 352 660 338 C658 332 655 328 650 326 Z" fill="#8a4a2e"/>
  <ellipse cx="639" cy="339.5" rx="10.5" ry="8" fill="#f2d2a8"/>
  <!-- hooks -->
  <g fill="none" stroke="#37393b" stroke-width="4.800" stroke-linecap="round">
    <path d="M478.200 426 L478.200 393 C478.200 381 484 375.500 492.500 375.500 C501 375.500 507.500 382 508 393.500"/>
    <path d="M797.200 393.500 C797.700 382 804.200 375.500 812.700 375.500 C821.200 375.500 827 381 827 393 L827 419.500"/>
  </g>
  <circle cx="492.500" cy="379.600" r="4.500" fill="none" stroke="#37393b" stroke-width="6"/>
  <circle cx="812.700" cy="379.600" r="4.500" fill="none" stroke="#37393b" stroke-width="6"/>
  <!-- leaves -->
  <path d="M887 692 C888 672 897 652 915 642 C930 634 945 633 958 635.500 C958.500 648 955 660 945 671 C936 680 924 686 912 695 L888 693.500 Z" fill="#4c9837"/>
  <path d="M912 664 C920 657 929 651 937.500 647.500 C931 654 922 660.500 914 666 Z" fill="#fff"/>
  <path d="M911 690 C915 682 922 676 931 673 C944 670 956 673 964 678 C960 687 952 693 943 697 C933 701 920 699.500 913 695 Z" fill="#86c04f"/>
  <!-- cup -->
  <path d="M678 590 C678 640 712 699 800 699 L830 699 C900 699 936 640 936 590 Z" fill="#8a5b45"/>
  <g clip-path="url(#cCup)">
    <path d="M678 590 C678 640 712 699 800 699 L740 699 C700 670 684 640 684 590 Z" fill="#7e4a33"/>
    <ellipse cx="758" cy="610" rx="69" ry="58" fill="#a47a62"/>
    <path d="M884 600 C884 650 850 690 820 700 L940 700 L940 590 Z" fill="#7c4129"/>
  </g>
  <ellipse cx="807" cy="589" rx="129" ry="39.5" fill="#7c4129"/>
  <ellipse cx="807" cy="589.300" rx="124" ry="37.300" fill="#fbecd3"/>
  <g clip-path="url(#cCupIn)">
    <ellipse cx="807" cy="609" rx="93" ry="22" fill="#fbdd8c"/>
    <ellipse cx="793" cy="618" rx="68" ry="19" fill="#edb84a"/>
  </g>
  <g fill="#9a6a50">
    <ellipse cx="752" cy="606.5" rx="5" ry="2"/><ellipse cx="777" cy="605" rx="9" ry="2.5"/>
    <ellipse cx="810" cy="603.5" rx="9" ry="3"/><ellipse cx="783" cy="613.5" rx="6" ry="2"/>
    <ellipse cx="817" cy="612" rx="5" ry="2"/><ellipse cx="829" cy="608" rx="3.5" ry="2"/>
    <ellipse cx="840" cy="600" rx="3" ry="2"/><ellipse cx="850" cy="609.5" rx="5" ry="2"/>
  </g>
  <ellipse cx="733.5" cy="640" rx="8.5" ry="5" fill="#f1dcc0"/>
  <ellipse cx="755" cy="648" rx="11.5" ry="6" fill="#f1dcc0"/>
  <!-- chopsticks -->
  <g>
    <path d="M325 603 C325 598 327 596 331 597 L636 734 L624 746.5 L331 614.5 C327 613 325 610 325 603 Z" fill="#c59c5f"/>
    <path d="M325 603 C325 598 327 596 331 597 L637 732.5 L629 741 L328 608.5 Z" fill="#dcb67c"/>
    <path d="M636.4 730.5 L714.3 761.3 C716 762 716.5 763 716 765 L708.5 782 C707.5 784.5 706 785 704 784 L623.6 746 C621.5 745 621.5 743 623 741.5 L633 731.5 C634 730.3 635 730 636.4 730.5 Z" fill="#c59c5f"/>
    <path d="M636.4 730.5 L714.3 761.3 C716 762 716.5 763 716 765 L710.5 777.5 C709.5 779.5 708 780 706 779 L627 742.5 L633 731.5 C634 730.3 635 730 636.4 730.5 Z" fill="#dcb67c"/>
    <path d="M325 600 C325 595 328 592.5 333.3 593.4 L646 702 L640 714.5 L352 614 L329 610 C326 609 325 606 325 600 Z" fill="#c59c5f"/>
    <path d="M325 600 C325 595 328 592.5 333.3 593.4 L647 701 L642 709.5 L350 608 L327 603 Z" fill="#dcb67c"/>
    <path d="M646.7 699 L728 725.3 C730 726 730.5 727.5 730 729.5 L723.5 747 C722.5 749.5 721 750 719 749.3 L633.8 716 C632 715 632 713.5 633 712 L643.5 700 C644.5 699 645.5 698.6 646.7 699 Z" fill="#c59c5f"/>
    <path d="M646.7 699 L728 725.3 C730 726 730.5 727.5 730 729.5 L725.5 741.5 C724.5 743.5 723 744 721 743.3 L638 712 L643.5 700 C644.5 699 645.5 698.6 646.7 699 Z" fill="#dcb67c"/>
  </g>
</svg>
</div>
<div id="vscroll">
  <div style="left:0;top:0;width:4px;height:716px;background:#666"></div>
  <div style="left:23px;top:0;width:4px;height:716px;background:#2f2f2f"></div>
  <svg style="left:8px;top:8px" width="13" height="8" viewBox="0 0 13 8"><path d="M0.5 7.5 L6.5 0.5 L12.5 7.5 Z" fill="#e4e4e4"/></svg>
  <div style="left:5px;top:347px;width:18px;height:19px;background:#b2b2b2"></div>
  <svg style="left:8px;top:699px" width="13" height="8" viewBox="0 0 13 8"><path d="M0.5 0.5 L6.5 7.5 L12.5 0.5 Z" fill="#e4e4e4"/></svg>
</div>
<!-- RIGHT PANELS -->
<div id="right">
  <div style="left:0;top:0;width:288px;height:15px;background:#363636"></div>
  <svg style="left:277px;top:3px" width="11" height="9" viewBox="0 0 11 9"><path d="M1 0.5 L5 4.5 L1 8.5 Z M6 0.5 L10 4.5 L6 8.5 Z" fill="#d0d0d0"/></svg>
  <!-- color guide panel -->
  <div class="ptabs" style="top:15px;height:23px"></div>
  <span class="ptab" style="left:1px;top:15px;width:47px">颜色</span>
  <span class="ptab on" style="left:48px;top:15px;width:84px;padding-left:12px">颜色参考</span>
  <svg style="left:53px;top:21px" width="9" height="12" viewBox="0 0 9 12"><path d="M1.5 4.5 L4.5 1.5 L7.5 4.5 M1.5 7.5 L4.5 10.500 L7.5 7.5" fill="none" stroke="#e2e2e2" stroke-width="1.5"/></svg>
  <span class="ptab" style="left:132px;top:15px;width:48px">描边</span>
  <span class="ptab" style="left:180px;top:15px;width:48px">渐变</span>
  <svg class="pmenu" style="left:273px;top:23px" width="15" height="8" viewBox="0 0 15 8"><path d="M0 1.5 L5 1.5 L2.5 5 Z" fill="#cfcfcf"/><path d="M6.5 1 H15 M6.5 3.5 H15 M6.5 6 H15" stroke="#cfcfcf" stroke-width="1.2"/></svg>
  <div style="left:7px;top:47px;width:26px;height:26px;background:#db8258;border:2px solid #fff;box-shadow:inset 0 0 0 1.5px #111,0 0 0 1px #222"></div>
  <div style="left:42px;top:47px;width:228px;height:27px;background:#e1e1e1;border:1px solid #8a8a8a;box-shadow:0 0 0 1px #333"></div>
  <div style="left:45px;top:50px;width:100px;height:21px;background:linear-gradient(to right,#c4351a 0 20%,#6e2213 20% 40%,#6a6a1e 40% 60%,#2daa8c 60% 80%,#8c48ac 80% 100%);border:1px solid #2a2a2a"></div>
  <div style="left:46px;top:51px;width:19px;height:19px;border:1px solid #a9a9a9"></div>
  <div style="left:270px;top:47px;width:18px;height:27px;background:#5c5c5c;border:1px solid #333"></div>
  <svg style="left:274px;top:57px" width="10" height="7" viewBox="0 0 10 7"><path d="M0.5 0.5 L9.5 0.5 L5 6 Z" fill="#eaeaea"/></svg>
  <span class="blab" style="left:40px;top:83px">暗色</span>
  <svg style="left:146px;top:89px" width="8" height="5" viewBox="0 0 8 5"><path d="M0.5 0.5 L7.5 0.5 L4 4.5 Z" fill="#e6e6e6"/></svg>
  <span class="blab" style="left:226px;top:83px">淡色</span>
  <div style="left:7px;top:105px;width:282px;height:218px;border:1px solid #5d5d5d;border-right:0;box-shadow:inset 1px 1px 0 #3a3a3a"></div>
  <svg style="left:8px;top:106px" width="281" height="93" viewBox="1285 184 281 93">
<rect x="1285" y="184" width="283" height="92.3" fill="#111"/>
<rect x="1285" y="184" width="31.2" height="92.3" fill="#000"/>
<rect x="1316.2" y="184.5" width="31.5" height="17.6" fill="#3d3431"/>
<rect x="1347.7" y="184.5" width="31.6" height="17.6" fill="#7a4f3c"/>
<rect x="1379.3" y="184.5" width="31.1" height="17.6" fill="#b0522f"/>
<rect x="1410.4" y="184.5" width="31.5" height="17.6" fill="#c4351a"/>
<rect x="1441.9" y="184.5" width="31.7" height="17.6" fill="#c85a34"/>
<rect x="1473.6" y="184.5" width="31.6" height="17.6" fill="#db8258"/>
<rect x="1505.2" y="184.5" width="31.5" height="17.6" fill="#e5a98b"/>
<rect x="1536.7" y="184.5" width="31.3" height="17.6" fill="#f2d0bc"/>
<rect x="1316.2" y="202.9" width="31.5" height="17.5" fill="#2a2523"/>
<rect x="1347.7" y="202.9" width="31.6" height="17.5" fill="#48322a"/>
<rect x="1379.3" y="202.9" width="31.1" height="17.5" fill="#5e3020"/>
<rect x="1410.4" y="202.9" width="31.5" height="17.5" fill="#6e2213"/>
<rect x="1441.9" y="202.9" width="31.7" height="17.5" fill="#80402e"/>
<rect x="1473.6" y="202.9" width="31.6" height="17.5" fill="#9a6450"/>
<rect x="1505.2" y="202.9" width="31.5" height="17.5" fill="#bc9484"/>
<rect x="1536.7" y="202.9" width="31.3" height="17.5" fill="#dec6b8"/>
<rect x="1316.2" y="221.2" width="31.5" height="17.7" fill="#322e29"/>
<rect x="1347.7" y="221.2" width="31.6" height="17.7" fill="#4e4b2f"/>
<rect x="1379.3" y="221.2" width="31.1" height="17.7" fill="#66642f"/>
<rect x="1410.4" y="221.2" width="31.5" height="17.7" fill="#6a6a1e"/>
<rect x="1441.9" y="221.2" width="31.7" height="17.7" fill="#7e7c36"/>
<rect x="1473.6" y="221.2" width="31.6" height="17.7" fill="#9c9a55"/>
<rect x="1505.2" y="221.2" width="31.5" height="17.7" fill="#bdbb8a"/>
<rect x="1536.7" y="221.2" width="31.3" height="17.7" fill="#dddcbe"/>
<rect x="1316.2" y="239.7" width="31.5" height="17.8" fill="#3a4540"/>
<rect x="1347.7" y="239.7" width="31.6" height="17.8" fill="#4e7568"/>
<rect x="1379.3" y="239.7" width="31.1" height="17.8" fill="#4f967f"/>
<rect x="1410.4" y="239.7" width="31.5" height="17.8" fill="#2daa8c"/>
<rect x="1441.9" y="239.7" width="31.7" height="17.8" fill="#5cbb9e"/>
<rect x="1473.6" y="239.7" width="31.6" height="17.8" fill="#82cdb4"/>
<rect x="1505.2" y="239.7" width="31.5" height="17.8" fill="#abdfcc"/>
<rect x="1536.7" y="239.7" width="31.3" height="17.8" fill="#d5efe4"/>
<rect x="1316.2" y="258.3" width="31.5" height="17.7" fill="#3e383f"/>
<rect x="1347.7" y="258.3" width="31.6" height="17.7" fill="#6a5577"/>
<rect x="1379.3" y="258.3" width="31.1" height="17.7" fill="#85549a"/>
<rect x="1410.4" y="258.3" width="31.5" height="17.7" fill="#8c48ac"/>
<rect x="1441.9" y="258.3" width="31.7" height="17.7" fill="#a368bc"/>
<rect x="1473.6" y="258.3" width="31.6" height="17.7" fill="#b98acd"/>
<rect x="1505.2" y="258.3" width="31.5" height="17.7" fill="#d0b0dd"/>
<rect x="1536.7" y="258.3" width="31.3" height="17.7" fill="#e8d6ec"/>
<rect x="1378.8" y="184" width="1" height="92.3" fill="#161616" opacity="0.75"/>
<rect x="1409.9" y="184" width="1" height="92.3" fill="#161616" opacity="0.75"/>
<rect x="1441.4" y="184" width="1" height="92.3" fill="#161616" opacity="0.75"/>
<rect x="1504.7" y="184" width="1" height="92.3" fill="#161616" opacity="0.75"/>
<rect x="1536.2" y="184" width="1" height="92.3" fill="#161616" opacity="0.75"/>
<rect x="1474.4" y="184.8" width="30" height="16.8" fill="none" stroke="#f2f2f2" stroke-width="1.6"/>
<rect x="1476.2" y="186.6" width="26.4" height="13.2" fill="none" stroke="#1a1a1a" stroke-width="1.6"/>
</svg>
  <!-- bottom row of color guide -->
  <svg style="left:13px;top:330px" width="30" height="14" viewBox="0 0 30 14">
    <rect x="0.8" y="1.8" width="15.5" height="10.500" fill="#4d4d4d" stroke="#e0e0e0" stroke-width="1.4"/>
    <path d="M6 2 V12 M11.2 2 V12 M1 7 H16" stroke="#e0e0e0" stroke-width="1.2"/>
    <path d="M18 9.500 L24 9.500 L21 13 Z" fill="#e0e0e0"/>
  </svg>
  <span class="serif" style="left:47px;top:329px;font-size:14px;line-height:16px;color:#e8e8e8;font-weight:bold">无</span>
  <svg style="left:216px;top:328px" width="18" height="18" viewBox="0 0 20 20">
    <circle cx="10" cy="10" r="8.6" fill="#bdbdbd" stroke="#e2e2e2" stroke-width="1"/>
    <path d="M10 10 L10 1.4 A8.6 8.6 0 0 1 17.4 5.7 Z" fill="#f4f4f4"/>
    <path d="M10 10 L17.4 14.3 A8.6 8.6 0 0 1 10 18.600 Z" fill="#7d7d7d"/>
    <path d="M10 10 L2.6 14.3 A8.6 8.6 0 0 1 2.6 5.7 Z" fill="#9a9a9a"/>
    <circle cx="10" cy="10" r="2.2" fill="#555"/>
  </svg>
  <svg style="left:246px;top:330px" width="22" height="14" viewBox="0 0 22 14">
    <path d="M0.5 9 H7 M3.8 5.5 V12.5" stroke="#e6e6e6" stroke-width="2.2"/>
    <path d="M4 6 V1.5 H9" fill="none" stroke="#e6e6e6" stroke-width="1.4"/>
    <rect x="9" y="1" width="5" height="10.500" fill="#e6e6e6"/><rect x="15.500" y="1" width="5" height="10.500" fill="none" stroke="#e6e6e6" stroke-width="1.3"/>
  </svg>
  <!-- layers panel -->
  <div style="left:0;top:347px;width:288px;height:6px;background:#3a3a3a"></div>
  <div class="ptabs" style="top:353px;height:21px"></div>
  <span class="ptab" style="left:1px;top:353px;width:47px;height:21px;line-height:21px">色板</span>
  <span class="ptab" style="left:48px;top:353px;width:48px;height:21px;line-height:21px">画笔</span>
  <span class="ptab on" style="left:96px;top:353px;width:49px;height:21px;line-height:21px">图层</span>
  <span class="ptab" style="left:145px;top:353px;width:93px;height:21px;line-height:21px">路径查找器</span>
  <svg class="pmenu" style="left:273px;top:360px" width="15" height="8" viewBox="0 0 15 8"><path d="M0 1.5 L5 1.5 L2.5 5 Z" fill="#cfcfcf"/><path d="M6.5 1 H15 M6.5 3.5 H15 M6.5 6 H15" stroke="#cfcfcf" stroke-width="1.2"/></svg>
  <div style="left:7px;top:381px;width:282px;height:196px;border:1px solid #5d5d5d;border-right:0;box-shadow:inset 1px 1px 0 #3a3a3a"></div>
  <div id="layer" style="left:7px;top:382px;width:281px;height:26px;background:#5b6578;border-bottom:1px solid #3b3f48">
    <div style="left:26px;top:0;width:1px;height:26px;background:#454c5a"></div>
    <div style="left:52px;top:0;width:1px;height:26px;background:#454c5a"></div>
    <div style="left:53px;top:1px;width:6px;height:24px;background:#4e7fee"></div>
    <div style="left:239px;top:0;width:1px;height:26px;background:#454c5a"></div>
    <svg style="left:3px;top:5px" width="22" height="16" viewBox="0 0 22 16">
      <path d="M1.5 8.5 C5 2.5 16 2.5 20.500 8.5 C16 14 5 14 1.5 8.5 Z" fill="#e9e9e9" stroke="#cfcfcf" stroke-width="1"/>
      <circle cx="11" cy="8.300" r="3.800" fill="#3a3a3a"/>
      <circle cx="11" cy="8.300" r="1.600" fill="#6b6b4a"/>
    </svg>
    <svg style="left:65px;top:7px" width="10" height="12" viewBox="0 0 10 12"><path d="M1 0.5 L9 6 L1 11.500 Z" fill="#f2f2f2"/></svg>
    <svg style="left:87px;top:3px" width="22" height="22" viewBox="0 0 22 22">
      <rect x="0.5" y="0.5" width="20.500" height="20.500" fill="#fff" stroke="#1d1d1d"/>
      <rect x="1" y="1" width="19.500" height="3" fill="#efe2d6"/>
      <path d="M7.5 4 L14 4 L14 6 L7.5 6 Z" fill="#c8b8a8"/>
      <ellipse cx="11" cy="11.500" rx="5.800" ry="4" fill="#9b4a2a"/>
      <ellipse cx="9.500" cy="10.300" rx="2.200" ry="1.500" fill="#e0a987"/>
      <ellipse cx="15" cy="14" rx="3" ry="1.800" fill="#b86a3a"/>
      <path d="M3 14 L10 17.500" stroke="#d9b57c" stroke-width="1.200"/>
      <path d="M4.500 8.500 L6 10" stroke="#7a3a20" stroke-width="1.400"/>
      <rect x="1" y="17.500" width="19.500" height="3" fill="#f3ede6"/>
    </svg>
    <span class="serif" style="left:116px;top:5px;font-size:14.500px;line-height:17px;color:#eeeeee;white-space:nowrap;letter-spacing:0.2px">图层 1</span>
    <svg style="left:245px;top:4px" width="36" height="18" viewBox="0 0 36 18">
      <circle cx="7" cy="9.500" r="4.600" fill="#4b5262" stroke="#e4e4e4" stroke-width="1.500"/>
      <rect x="20.500" y="6" width="6.500" height="6.500" fill="#3b5fe0" stroke="#8fa5f2" stroke-width="0.800"/>
    </svg>
    <svg style="left:274px;top:0" width="7" height="7" viewBox="0 0 7 7"><path d="M0 0 H7 V7 Z" fill="#e8e8e8"/></svg>
  </div>
  <!-- layers footer -->
  <span class="serif" style="left:8px;top:582px;font-size:14px;line-height:16px;color:#dcdcdc;white-space:nowrap">1 个图层</span>
  <svg style="left:118px;top:580px" width="20" height="18" viewBox="0 0 20 18">
    <circle cx="12" cy="7" r="4.800" fill="#4d4d4d" stroke="#e2e2e2" stroke-width="1.800"/>
    <path d="M8.500 10.500 L3 16" stroke="#e2e2e2" stroke-width="2.400" stroke-linecap="round"/>
  </svg>
  <svg style="left:150px;top:581px" width="18" height="16" viewBox="0 0 18 16">
    <rect x="1" y="1" width="11" height="10" fill="none" stroke="#6f6f6f" stroke-width="1.300"/>
    <rect x="4" y="4" width="6" height="5" fill="#6a6a6a"/>
    <path d="M3 14 H15 V4" fill="none" stroke="#6a6a6a" stroke-width="1.200" stroke-dasharray="1.500 1.500"/>
  </svg>
  <svg style="left:181px;top:581px" width="22" height="16" viewBox="0 0 22 16">
    <path d="M1 4 H6 M4 1.500 L6.500 4 L4 6.500" fill="none" stroke="#e2e2e2" stroke-width="1.600"/>
    <path d="M9 2 H20 V13 H15 V7 H9 Z" fill="#e2e2e2"/>
    <rect x="9.500" y="8.500" width="4.500" height="4.500" fill="none" stroke="#e2e2e2" stroke-width="1.200"/>
  </svg>
  <svg style="left:217px;top:581px" width="16" height="16" viewBox="0 0 16 16">
    <path d="M2 1.500 H14 V13 H8.500 V7.500 H2 Z" fill="#e6e6e6"/>
    <path d="M2 8 L8 14 H2 Z" fill="#4d4d4d" stroke="#e6e6e6" stroke-width="1"/>
  </svg>
  <svg style="left:246px;top:580px" width="18" height="18" viewBox="0 0 18 18">
    <path d="M2 4.500 H16 M6 4 V2 H12 V4 M3.500 7 H14.500 M3.500 10 H14.500 M3.500 13 H14.500 M3.500 16 H14.500" fill="none" stroke="#686868" stroke-width="1.400" stroke-dasharray="2 1.200"/>
  </svg>
  <!-- transparency panel -->
  <div style="left:0;top:600px;width:288px;height:5px;background:#3a3a3a"></div>
  <div style="left:7px;top:606px;width:282px;height:20px;background:#3d3d3d"></div>
  <span style="left:14px;top:608px;font-size:13px;line-height:16px;color:#cfcfcf;white-space:nowrap">透明度</span>
  <svg class="pmenu" style="left:273px;top:612px" width="15" height="8" viewBox="0 0 15 8"><path d="M0 1.500 L5 1.500 L2.500 5 Z" fill="#cfcfcf"/><path d="M6.500 1 H15 M6.500 3.500 H15 M6.500 6 H15" stroke="#cfcfcf" stroke-width="1.200"/></svg>
  <div style="left:18px;top:634px;width:88px;height:22px;background:#6b6b6b;border:1px solid #3a3a3a"></div>
  <span style="left:22px;top:637px;font-size:13px;line-height:16px;color:#2a2a2a;white-space:nowrap">正常</span>
  <span style="left:118px;top:637px;font-size:13px;line-height:16px;color:#cfcfcf;white-space:nowrap">不透明度：</span>
  <div class="field serif" style="left:196px;top:634px;width:64px;padding-left:8px">100%</div>
  <div style="left:260px;top:634px;width:21px;height:22px;background:#5a5a5a;border:1px solid #3a3a3a"></div>
  <svg style="left:267px;top:639px" width="9" height="12" viewBox="0 0 9 12"><path d="M1 1 L8 6 L1 11 Z" fill="#f0f0f0"/></svg>
  <div style="left:178px;top:679px;width:86px;height:21px;background:linear-gradient(#727272,#5a5a5a);border:1px solid #333;border-radius:2px"></div>
  <span style="left:184px;top:681px;font-size:14px;line-height:17px;color:#e8e8e8;white-space:nowrap;font-weight:bold">制作蒙版</span>
  <div style="left:178px;top:710px;width:13px;height:13px;border:1px solid #6a6a6a;background:#474747"></div>
  <span style="left:199px;top:709px;font-size:14px;line-height:16px;color:#6f6f6f;white-space:nowrap">剪切</span>
  <div style="left:178px;top:733px;width:13px;height:13px;border:1px solid #6a6a6a;background:#474747"></div>
  <span style="left:199px;top:732px;font-size:14px;line-height:16px;color:#6f6f6f;white-space:nowrap">反相蒙版</span>
  <!-- watermark -->
  <div id="wm" style="left:0;top:0;width:288px;height:740px">
    <svg style="left:0;top:560px" width="288" height="180" viewBox="1277 638 288 180">
      <g fill="#cfcfcf">
        <ellipse cx="1333" cy="665" rx="9.2" ry="14"/>
        <ellipse cx="1358" cy="666.5" rx="10.300" ry="13.600"/>
        <ellipse cx="1314" cy="684.600" rx="9.800" ry="13"/>
        <ellipse cx="1373" cy="687" rx="9.500" ry="12.500"/>
        <path d="M1343 687 C1352 687 1358 694 1364 701 C1371 709 1379 714 1378 725 C1377 736 1367 741 1357 739 C1350 738 1346 737 1342 737 C1337 737 1333 739 1326 740 C1316 741 1308 735 1308.500 725 C1309 714 1318 709 1324 701 C1329 694 1334 687 1343 687 Z"/>
      </g>
      <text x="1318.500" y="730" font-family="'Liberation Sans',sans-serif" font-weight="bold" font-size="40" fill="#4a4a4a">du</text>
      <text x="1387" y="733" font-family="'Liberation Sans','Noto Sans CJK SC',sans-serif" font-weight="900" font-size="47" fill="#e2e2e2">经验</text>
      <clipPath id="wmclip"><rect x="1293" y="740" width="272" height="78"/></clipPath><text x="1199" y="776.500" clip-path="url(#wmclip)" font-family="'Liberation Sans',sans-serif" font-weight="bold" font-size="33" fill="#e0e0e0" letter-spacing="0.500">jingyan.baidu.com</text>
    </svg>
    <div style="left:15px;top:612px;width:9px;height:50px;overflow:hidden"><span style="right:1px;top:0;font-size:50px;line-height:50px;font-weight:bold;color:#d2d2d2;white-space:nowrap">Bai</span></div>
  <div style="left:12px;top:684.800px;width:60px;height:56px;background:#fff"></div>
  <svg style="left:12px;top:700px" width="60" height="22" viewBox="0 0 60 22"><path d="M2 8 C8 19 50 19 58 7 C60 12 50 20 30 20 C12 20 2 14 2 8 Z" fill="#a05a38"/><path d="M6 12 C14 17 46 17 54 10" fill="none" stroke="#c98d6a" stroke-width="1.200"/></svg>
    <!-- erased blob / blocks -->
    <svg style="left:0;top:560px" width="288" height="180" viewBox="1277 638 288 180">
      <path d="M1340 694 C1340 688 1346 686 1352 686 C1358 684 1366 682.500 1380 682.500 L1484 682.500 C1500 685 1512 692 1523 700 L1523 705 L1482 705 L1482 715 L1344 715 C1340 712 1340 704 1340 694 Z" fill="#4b4b4b"/>
      <rect x="1348" y="756.500" width="156" height="22" fill="#4b4b4b"/>
      <rect x="1348" y="778" width="106" height="40" fill="#4b4b4b"/>
      <path d="M1383.500 777 V818 M1444.500 777 V818" stroke="#7c7c7c" stroke-width="1.500"/>
      <circle cx="1414" cy="791.500" r="13" fill="none" stroke="#bcbcbc" stroke-width="4.500"/>
      <path d="M1405 782.500 L1423 800.500" stroke="#bcbcbc" stroke-width="4.500"/>
    </svg>
  </div>
</div>
  <!-- IME bar -->
  <div style="left:0;top:804.500px;width:198.500px;height:14px;background:#fcfcfc"></div>
  <div style="left:-8px;top:801px;width:36px;height:30px;background:#3fb63a;border-radius:7px;transform:rotate(-11deg)"></div>
  <span style="left:1px;top:801px;font-size:36px;line-height:36px;font-weight:bold;color:#fff;transform:rotate(-8deg) scaleX(1.200)">S</span>
  <span style="left:39px;top:811px;font-size:17px;line-height:17px;color:#2c3550;font-weight:bold">英</span>
  <svg style="left:74px;top:810px" width="30" height="8" viewBox="0 0 30 8"><path d="M6.500 1 C5 4 3.500 6.500 1.500 8 L11 8 Z" fill="#2c3550"/><circle cx="24" cy="5.500" r="1.800" fill="#2c3550"/></svg>
  <div style="left:119px;top:812px;width:19.500px;height:10px;border:2px solid #2c3550;border-radius:2.500px"></div>
  <div style="left:122.500px;top:815.500px;width:3px;height:2px;background:#2c3550"></div><div style="left:127.500px;top:815.500px;width:3px;height:2px;background:#2c3550"></div><div style="left:132.500px;top:815.500px;width:3px;height:2px;background:#2c3550"></div>
  <div style="left:153px;top:812.500px;width:7px;height:7px;border-radius:4px;background:#c5d2da"></div>
  <svg style="left:180px;top:808px" width="14" height="10" viewBox="0 0 14 10"><path d="M10.500 1 C6 3 3 6 2.500 10 L6 10 C6.500 6.500 8 4 11.500 2.500 Z" fill="#2c3550"/></svg>
</body>
</html>
